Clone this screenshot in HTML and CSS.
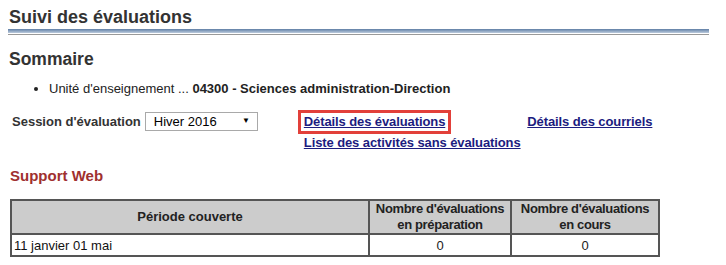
FILE: index.html
```html
<!DOCTYPE html>
<html lang="fr">
<head>
    <meta charset="UTF-8">
    <title>Suivi des évaluations</title>
    <link rel="stylesheet" href="styles.css">
</head>
<body>
    <div class="page">
        <h1 class="page-title">Suivi des évaluations</h1>
        <div class="title-rule"></div>

        <h2 class="section-title">Sommaire</h2>
        <ul class="summary">
            <li>Unité d'enseignement ... <strong>04300 - Sciences administration-Direction</strong></li>
        </ul>

        <div class="session-row">
            <label class="session-label">Session d'évaluation
                <span class="select-wrap">
                    <select class="session-select">
                        <option>Hiver 2016</option>
                    </select>
                    <span class="select-arrow">&#9660;</span>
                </span>
            </label>
            <div class="links">
                <div class="links-top">
                    <a href="#" class="link link-active">Détails des évaluations</a>
                    <a href="#" class="link link-mail">Détails des courriels</a>
                </div>
                <a href="#" class="link link-list">Liste des activités sans évaluations</a>
            </div>
        </div>

        <h3 class="support-title">Support Web</h3>
        <table class="eval-table">
            <colgroup>
                <col class="col-period">
                <col class="col-prep">
                <col class="col-course">
            </colgroup>
            <thead>
                <tr>
                    <th>Période couverte</th>
                    <th class="count">Nombre d'évaluations<br>en préparation</th>
                    <th class="count">Nombre d'évaluations<br>en cours</th>
                </tr>
            </thead>
            <tbody>
                <tr>
                    <td>11 janvier 01 mai</td>
                    <td class="num">0</td>
                    <td class="num">0</td>
                </tr>
            </tbody>
        </table>
    </div>
</body>
</html>
```

FILE: styles.css
```css
* {
    margin: 0;
    padding: 0;
    box-sizing: border-box;
}

body {
    font-family: 'Liberation Sans', Arial, sans-serif;
    font-size: 13px;
    color: #222;
    background: #fff;
}

.page {
    padding: 7px 17px 0 8px;
}

.page-title {
    font-size: 18px;
    font-weight: bold;
    color: #333;
    padding-left: 1px;
    line-height: 20px;
}

/* double rule under the page title */
.title-rule {
    margin-top: 2px;
    height: 6px;
    padding-bottom: 1px;
    background: linear-gradient(#5f7ea5, #bccbdd) content-box;
    border-bottom: 1px solid #999;
}

.section-title {
    font-size: 17.5px;
    font-weight: bold;
    color: #333;
    margin-top: 14px;
    padding-left: 1px;
    line-height: 20px;
}

.summary {
    margin: 12px 0 0 41px;
    line-height: 16px;
}

.summary strong {
    color: #222;
}

.session-row {
    display: flex;
    margin-top: 13px;
    padding-left: 4px;
}

.session-label {
    font-weight: bold;
    color: #333;
    display: flex;
    align-items: center;
    gap: 4px;
    height: 22px;
}

.select-wrap {
    position: relative;
    display: inline-block;
}

.session-select {
    appearance: none;
    -webkit-appearance: none;
    font-family: 'Liberation Sans', Arial, sans-serif;
    font-size: 13px;
    width: 113px;
    height: 19px;
    border: 1px solid #a9a9a9;
    border-radius: 0;
    padding-left: 8px;
    color: #000;
    background: #fff;
    display: block;
}

.select-arrow {
    position: absolute;
    right: 8px;
    top: 4px;
    font-size: 8px;
    line-height: 10px;
    color: #000;
    pointer-events: none;
}

.links {
    margin-left: 40px;
    display: flex;
    flex-direction: column;
    gap: 1px;
}

.links-top {
    display: flex;
    align-items: center;
}

.link {
    font-weight: bold;
    color: #1c1c80;
    text-decoration: underline;
    line-height: 16px;
    letter-spacing: -0.1px;
}

.link-active {
    border: 3px solid #e2403a;
    padding: 1px 3px;
}

.link-mail {
    margin-left: 76px;
}

.link-list {
    margin-left: 6px;
}

.support-title {
    font-size: 15px;
    font-weight: bold;
    color: #a0302f;
    margin-top: 16px;
    padding-left: 2px;
}

.eval-table {
    margin: 15px 0 0 2px;
    width: 648px;
    table-layout: fixed;
    border-collapse: collapse;
    border: 2px solid #555;
}

.col-period {
    width: 358px;
}

.col-prep {
    width: 142px;
}

.col-course {
    width: 148px;
}

.eval-table th,
.eval-table td {
    border: 2px solid #555;
}

.eval-table th {
    background: #cccccc;
    font-weight: bold;
    color: #222;
    height: 34px;
    line-height: 16px;
    padding: 0 1px;
    white-space: nowrap;
}

.eval-table th.count {
    letter-spacing: -0.35px;
}

.eval-table td {
    height: 22px;
    padding: 0 2px;
    color: #111;
}

.eval-table td.num {
    text-align: center;
    color: #222;
}
```
